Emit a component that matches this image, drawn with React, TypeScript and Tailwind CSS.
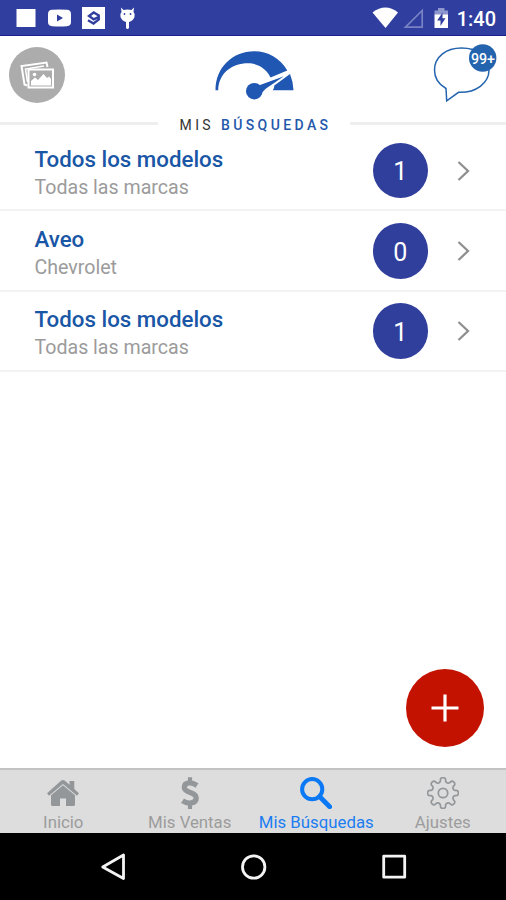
import React from "react";

interface SearchItem {
  title: string;
  brand: string;
  count: number;
}

const searches: SearchItem[] = [
  { title: "Todos los modelos", brand: "Todas las marcas", count: 1 },
  { title: "Aveo", brand: "Chevrolet", count: 0 },
  { title: "Todos los modelos", brand: "Todas las marcas", count: 1 },
];

const StatusBar = () => (
  <div className="flex h-9 shrink-0 items-center justify-between border-b border-[#1a1f8c] bg-[#303f9f] pr-[10px] pl-4">
    <svg width="120" height="35" viewBox="16 0 120 35" fill="#fff">
      <rect x="16.5" y="9" width="19" height="18" />
      <path d="M52 9.8Q59.5 9 67 9.8Q71 10 71 14V22Q71 26 67 26.2Q59.5 27 52 26.2Q48 26 48 22V14Q48 10 52 9.8Z" />
      <path d="M57 14.5L63 18L57 21.5Z" fill="#303f9f" />
      <rect x="82" y="7" width="23" height="22" />
      <path
        d="M98.5 17L93.7 19.300L89 16L93.700 12.500L98.800 15.500V19.500L93.500 23.500L88 20.300"
        fill="none"
        stroke="#303f9f"
        strokeWidth="2.3"
      />
      <path d="M121 7.500L123.500 10Q127.500 8.800 131.500 10L134 7.500L133.500 12Q135.500 14 134.500 17Q133 21 129 22V28Q127.500 30 126 28V22Q122 21 120.500 17Q119.500 14 121.500 12Z" />
      <circle cx="124.500" cy="14" r="0.900" fill="#303f9f" />
      <circle cx="130.500" cy="14" r="0.900" fill="#303f9f" />
    </svg>
    <div className="flex items-center">
      <svg width="84" height="35" viewBox="370 0 84 35" fill="#fff">
        <path d="M371.500 12.500Q384.500 2.500 397 12.500L384.500 28Z" />
        <path d="M404.500 27.200L421.200 10.500V27.200Z" fill="none" stroke="#7882c4" strokeWidth="1.700" />
        <path d="M437 8H443.500V10.500H447V15H433.500V10.500H437Z" fill="#8d96cd" />
        <path d="M433.500 14.500H447V28H433.500Z" />
        <path d="M441.500 12.500L436.200 20.500H439.500V26L444.500 18.300H441.500Z" fill="#303f9f" />
      </svg>
      <span className="mt-[3px] ml-[2px] text-[20px] leading-[35px] font-medium text-white">1:40</span>
    </div>
  </div>
);

const Header = () => (
  <header className="flex h-[95px] shrink-0 flex-col bg-white">
    <div className="flex h-[78px] justify-between">
      <button className="mt-[11px] ml-[9px] size-14 rounded-full bg-[#acacac]">
        <svg width="56" height="56" viewBox="9 47 56 56" fill="none" stroke="#fff" strokeWidth="2">
          <path d="M27 85.500L24.500 84.500L21.500 66L46.500 62.500L47.500 67" />
          <path d="M27.500 82L25.500 69L44 66" strokeWidth="1.500" />
          <path d="M28.500 69.500H53V87.500H28.500Z" />
          <path d="M31 85.500V81L35 77.500L38 80L43.500 74L47 78L49 76.500L51 79V85.500Z" fill="#fff" stroke="none" />
          <circle cx="34.500" cy="74.500" r="1.800" fill="#fff" stroke="none" />
        </svg>
      </button>
      <svg className="mt-3 ml-[16px]" width="84" height="58" viewBox="212 48 84 58" fill="#1f57b2">
        <path d="M214.500 90.300C214.500 68 231 51.300 253.300 51.300C267 51.300 279 58 286.300 70.500L269.500 77.500C266 70 258 63.300 247 63.300C231 63.300 217.700 73 217.200 90.300Z" />
        <path d="M289 74Q292.300 82 292.500 90.300H271.700Q273.500 88 273.300 85.500Z" />
        <path d="M283 76.300L259 85L260.500 93L265 88.500Z" />
        <circle cx="253.300" cy="91.200" r="8.300" />
      </svg>
      <svg className="mt-1 mr-[4px]" width="74" height="70" viewBox="428 40 74 70">
        <path
          d="M446 88.500C438 84 434.500 78 434.500 70C434.500 57 446 48 461.500 48C478 48 489 57 489 70C489 83 476 93 458.500 92.300L446.700 100.800Z"
          fill="#fff"
          stroke="#2464ae"
          strokeWidth="1.500"
        />
        <circle cx="482.700" cy="58" r="13.700" fill="#2464ae" />
        <text x="482.900" y="63.500" textAnchor="middle" fill="#fff" fontSize="14" fontWeight="500" textLength="24" lengthAdjust="spacingAndGlyphs">
          99+
        </text>
      </svg>
    </div>
    <div className="flex h-[17px] items-center">
      <span className="mt-[2px] h-[3px] w-[158px] bg-[#eeeeee]" />
      <h1 className="mt-[6px] flex-1 pl-[3px] text-center text-[14px] leading-[17px] tracking-[3.4px] whitespace-nowrap text-[#333]">
        MIS <span className="font-medium text-[#2458ab]">BÚSQUEDAS</span>
      </h1>
      <span className="mt-[2px] h-[3px] w-[156px] bg-[#eeeeee]" />
    </div>
  </header>
);

const SearchRow: React.FC<SearchItem> = ({ title, brand, count }) => (
  <li className="flex h-[80.300px] items-center border-b-2 border-[#f3f3f4] pt-px pl-[34.500px]">
    <div className="flex-1 pt-[3px]">
      <h2 className="text-[22.300px] leading-[30px] font-medium text-[#1956a6]">{title}</h2>
      <p className="text-[19.600px] leading-[27px] text-[#9b9b9b]">{brand}</p>
    </div>
    <span className="flex size-[55.500px] items-center justify-center rounded-full bg-[#303f9b] pt-[3px] text-[25px] text-white">
      {count}
    </span>
    <svg className="mr-9 ml-[29px]" width="13" height="20" viewBox="0 0 13 20" fill="none" stroke="#8f8f8f" strokeWidth="2.300">
      <path d="M1.500 1L11 10L1.500 19" />
    </svg>
  </li>
);

// cog outline with eight rounded teeth
const gearPath =
  Array.from({ length: 128 }, (_, i) => {
    const a = (i / 128) * Math.PI * 2;
    const w = Math.cos(a * 8);
    const r = 13.2 + 2.2 * Math.sign(w) * Math.pow(Math.abs(w), 0.75);
    // widen the tips a little so the teeth read as knobs
    const b = a + 0.035 * Math.sin(a * 16);
    return `${i ? "L" : "M"}${(16 + r * Math.cos(b)).toFixed(2)} ${(16 + r * Math.sin(b)).toFixed(2)}`;
  }).join("") + "Z";

const HomeIcon = () => (
  <svg width="32" height="32" viewBox="0 0 32 32" fill="#949799">
    <path d="M0 16.300L14 3.800Q16 2.200 18 3.800L22.500 7.800V4H27.300V12L32 16.300L30 18.800L16 7L2 18.800Z" />
    <path d="M16 8.300L28 18.300V27.500Q28 29 26.500 29H19V21.500H13V29H5.500Q4 29 4 27.500V18.300Z" />
  </svg>
);

const DollarIcon = () => (
  <svg width="32" height="32" viewBox="0 0 32 32" fill="none" stroke="#949799">
    <path d="M16 0.300V5M16 27V32" strokeWidth="4.200" />
    <path d="M23 8.500C20 6.500 17.500 5.700 15.200 5.900C12 6.200 10.300 8 10.300 10.200C10.300 16.500 22.200 14.500 22.200 20.800C22.200 27 14 27.300 8.500 23.800" strokeWidth="5.300" />
  </svg>
);

const SearchIcon = () => (
  <svg width="32" height="32" viewBox="0 0 32 32" fill="none" stroke="#0b79f5">
    <circle cx="12.200" cy="12.200" r="10.100" strokeWidth="4" />
    <path d="M19.500 19.500L29.700 29.700" strokeWidth="4.800" strokeLinecap="round" />
  </svg>
);

const GearIcon = () => (
  <svg width="32" height="32" viewBox="0 0 32 32" fill="none" stroke="#949799" strokeWidth="1.700" strokeLinejoin="round">
    <path d={gearPath} />
    <circle cx="16" cy="16" r="4.700" />
  </svg>
);

const tabs = [
  { label: "Inicio", icon: <HomeIcon /> },
  { label: "Mis Ventas", icon: <DollarIcon /> },
  { label: "Mis Búsquedas", icon: <SearchIcon />, active: true },
  { label: "Ajustes", icon: <GearIcon /> },
];

const TabBar = () => (
  <nav className="flex h-[65px] shrink-0 border-t-2 border-[#c2c2c2] bg-[#dddddd]">
    {tabs.map((tab) => (
      <button key={tab.label} className="flex flex-1 flex-col items-center pt-[7px]">
        {tab.icon}
        <span
          className={
            tab.active
              ? "mt-[3px] text-[16.800px] leading-5 whitespace-nowrap text-[#1b7df2]"
              : "mt-[3px] text-[16.800px] leading-5 whitespace-nowrap text-[#9c9c9c]"
          }>
          {tab.label}
        </span>
      </button>
    ))}
  </nav>
);

const SystemNav = () => (
  <div className="flex h-[67px] shrink-0 justify-center bg-black">
    <svg width="310" height="67" viewBox="98 833 310 67" fill="none" stroke="#f4f4f4" strokeWidth="2.800" strokeLinejoin="round">
      <path d="M102.700 867L123.500 855V878.500Z" />
      <circle cx="253.700" cy="867" r="11.200" />
      <rect x="383.700" y="856.200" width="21" height="21" />
    </svg>
  </div>
);

export default function App() {
  return (
    <div className="flex h-[900px] w-[506px] flex-col overflow-hidden bg-white font-[Roboto,sans-serif]">
      <StatusBar />
      <Header />
      <main className="relative flex-1">
        <ul>
          {searches.map((item, i) => (
            <SearchRow key={i} {...item} />
          ))}
        </ul>
        <button className="absolute right-[22px] bottom-[21.500px] flex size-[78px] items-center justify-center rounded-full bg-[#c31200]">
          <svg width="28" height="28" viewBox="0 0 28 28" stroke="#fff" strokeWidth="3.200">
            <path d="M14 0.500V27.500M0.500 14H27.500" />
          </svg>
        </button>
      </main>
      <TabBar />
      <SystemNav />
    </div>
  );
}
